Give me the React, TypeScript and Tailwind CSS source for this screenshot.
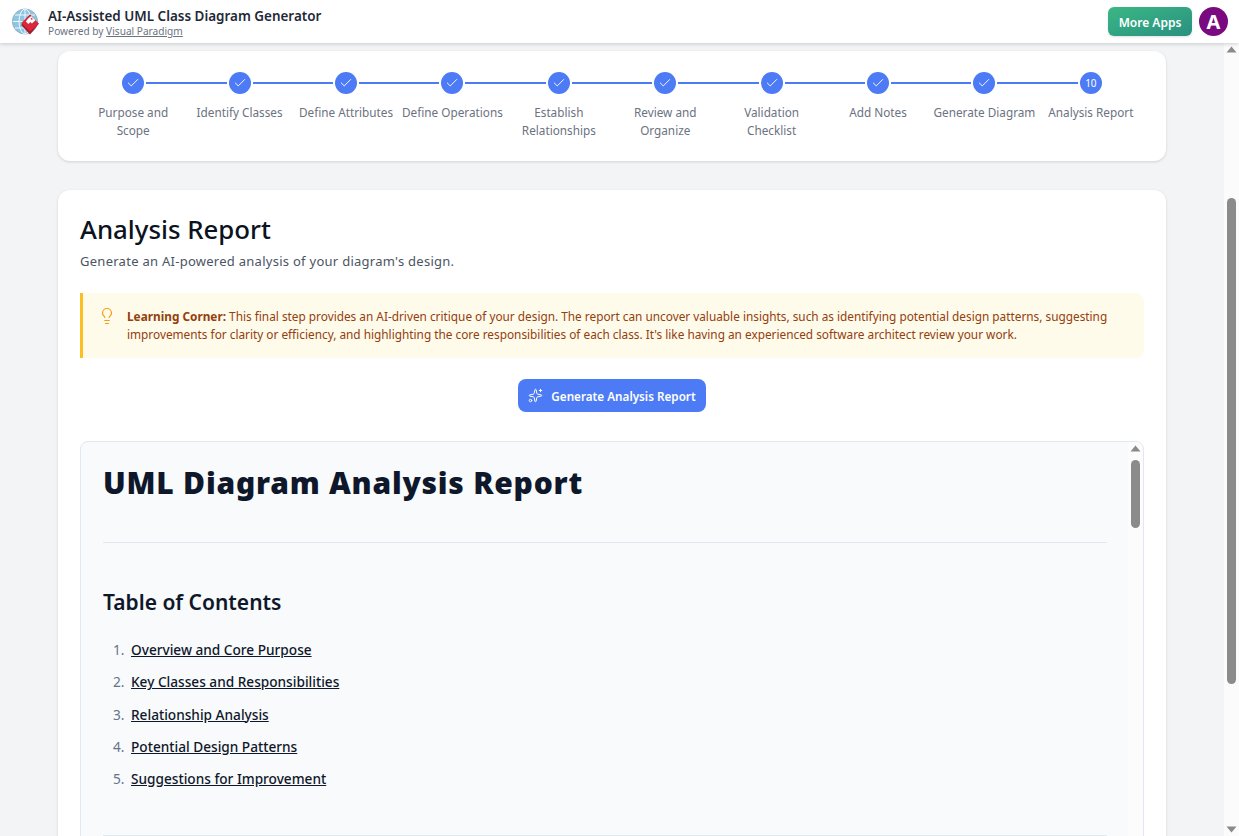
import React from "react";
import { Check, Lightbulb, Sparkles } from "lucide-react";

const steps = [
  ["Purpose and", "Scope"],
  ["Identify Classes"],
  ["Define Attributes"],
  ["Define Operations"],
  ["Establish", "Relationships"],
  ["Review and", "Organize"],
  ["Validation", "Checklist"],
  ["Add Notes"],
  ["Generate Diagram"],
  ["Analysis Report"],
];

const toc = [
  "Overview and Core Purpose",
  "Key Classes and Responsibilities",
  "Relationship Analysis",
  "Potential Design Patterns",
  "Suggestions for Improvement",
];

function Logo() {
  return (
    <svg width="27" height="27" viewBox="0 0 27 27" className="shrink-0">
      <circle cx="13" cy="13.5" r="12.6" fill="#8cc6e2" stroke="#8fa9b5" strokeWidth="0.8" />
      <g fill="none" stroke="#f0f8fc" strokeWidth="1">
        <ellipse cx="13" cy="13.5" rx="6" ry="12.5" />
        <path d="M1 13.5h24M3 7h20M3 20h20M13 1v25" />
      </g>
      <path d="M18 6.5l8.8 9.2L18 26.5 9.2 17z" fill="#a8182a" />
      <path d="M18 6.5l8.8 9.2L18 23.5 9.2 15z" fill="#d9293a" />
      <path d="M16.2 10.5l3-2.6 4.3 4.3-3.6 3.4-1.5-1.5-2 2-2.6-2.6z" fill="#fff" />
      <path d="M18.6 10.8l1-1 1.2 1.2-1 1z" fill="#d9293a" />
    </svg>
  );
}

function ScrollTrack({ thumbTop, thumbHeight, className }: { thumbTop: string; thumbHeight: string; className: string }) {
  return (
    <div className={className}>
      <svg width="15" height="15" viewBox="0 0 15 15" className="shrink-0">
        <path d="M7.5 3.5L12.5 9.5H2.5z" fill="#8a8a8a" />
      </svg>
      <div className={`mx-[3px] w-[9px] rounded-full bg-[#8b8b8b] ${thumbTop} ${thumbHeight}`} />
      <div className="flex-1" />
      <svg width="15" height="15" viewBox="0 0 15 15" className="shrink-0">
        <path d="M7.5 11.5L12.5 5.5H2.5z" fill="#8a8a8a" />
      </svg>
    </div>
  );
}

export default function App() {
  return (
    <div className="h-[836px] w-[1239px] overflow-hidden bg-[#f3f4f6] flex flex-col font-['Noto_Sans','Open_Sans',sans-serif]">
      <header className="z-10 h-[43px] shrink-0 bg-white flex items-center justify-between pl-3 pr-[11px] shadow-[0_1px_4px_rgba(0,0,0,0.18)]">
        <div className="flex items-center gap-[9px]">
          <Logo />
          <div className="flex flex-col pt-[3px]">
            <span className="text-[13.45px] leading-[17px] font-semibold text-[#1f2937]">AI-Assisted UML Class Diagram Generator</span>
            <span className="text-[10.15px] leading-[13px] text-[#6b7280]">
              Powered by <span className="underline">Visual Paradigm</span>
            </span>
          </div>
        </div>
        <div className="flex items-center gap-[7px]">
          <div className="h-[29px] w-[84px] rounded-md bg-gradient-to-br from-[#3bb784] to-[#2a9080] shadow-sm flex items-center justify-center pt-[2px] text-[12px] font-semibold text-white">
            More Apps
          </div>
          <div className="h-[29px] w-[29px] rounded-full bg-[#7a0a80] flex items-center justify-center text-[20px] font-bold text-white">
            A
          </div>
        </div>
      </header>

      <div className="flex-1 min-h-0 flex">
        <main className="flex-1 min-w-0 overflow-hidden pl-[58px] pr-[58px] pt-2">
          <section className="h-[110px] rounded-xl bg-white shadow-[0_1px_3px_rgba(0,0,0,0.14)] px-[22px] pt-[21px]">
            <div className="flex">
              {steps.map((s, i) => (
                <div key={i} className="relative flex-1 flex flex-col items-center">
                  {i < steps.length - 1 && (
                    <div className="absolute left-[calc(50%+13px)] right-[calc(-50%+13px)] top-[10px] h-[2px] bg-[#4c7bf5]" />
                  )}
                  <div className="h-[22px] w-[22px] rounded-full bg-[#4c7bf5] flex items-center justify-center text-white text-[10px]">
                    {i < 9 ? <Check size={14} strokeWidth={1.6} /> : "10"}
                  </div>
                  <div className="mt-[9px] text-center text-[11.75px] leading-[18px] text-[#6b7280] whitespace-nowrap">
                    {s.map((l) => (
                      <div key={l}>{l}</div>
                    ))}
                  </div>
                </div>
              ))}
            </div>
          </section>

          <section className="mt-[29px] rounded-t-xl bg-white shadow-[0_1px_3px_rgba(0,0,0,0.14)] px-[22px] pt-[22px] h-[700px]">
            <h1 className="text-[25.8px] leading-[34px] font-medium text-[#0b1220]">Analysis Report</h1>
            <p className="mt-[6px] text-[13px] leading-[18px] tracking-[0.27px] text-[#4b5563]">Generate an AI-powered analysis of your diagram's design.</p>

            <div className="mt-[23px] h-[65px] rounded-r-lg border-l-[3px] border-[#fbbf24] bg-[#fffbeb] flex pl-[15px] pr-[20px] pt-[14px] gap-[11px]">
              <Lightbulb size={18} strokeWidth={1.6} className="shrink-0 text-[#f59e0b]" />
              <p className="text-[11.82px] leading-[18px] text-[#92400e]">
                <strong className="font-bold">Learning Corner:</strong> This final step provides an AI-driven critique of your design. The report can uncover valuable insights, such as identifying potential design patterns, suggesting improvements for clarity or efficiency, and highlighting the core responsibilities of each class. It's like having an experienced software architect review your work.
              </p>
            </div>

            <div className="mt-[21px] flex justify-center">
              <div className="h-[33px] w-[188px] rounded-lg bg-[#4c7bf5] flex items-center justify-center gap-2 pt-[2px] text-[11.7px] font-semibold text-white">
                <Sparkles size={15} strokeWidth={1.6} className="-mt-[2px]" />
                Generate Analysis Report
              </div>
            </div>

            <div className="mt-[29px] h-[500px] rounded-t-lg border border-[#e2e8f0] bg-[#f8fafc] flex overflow-hidden">
              <div className="flex-1 min-w-0 pl-[22px] pr-[21px] pt-[20px]">
                <h2 className="text-[30px] leading-[42px] font-black tracking-[0.78px] text-[#0f172a]">UML Diagram Analysis Report</h2>
                <hr className="mt-[38px] border-[#e2e8f0]" />
                <h3 className="mt-[44px] text-[21px] leading-[30px] font-semibold text-[#0f172a]">Table of Contents</h3>
                <ol className="mt-[21px] list-none pl-[10px] text-[13.65px]">
                  {toc.map((t, i) => (
                    <li key={t} className="h-[32.3px] leading-[24px] text-[#0f172a] flex">
                      <span className="w-[18px] shrink-0 text-[#64748b]">{i + 1}.</span>
                      <span className="underline font-medium">{t}</span>
                    </li>
                  ))}
                </ol>
                <hr className="mt-[36px] border-[#e2e8f0]" />
              </div>
              <ScrollTrack className="w-[15px] shrink-0 bg-[#fcfcfd] flex flex-col" thumbTop="mt-[3px]" thumbHeight="h-[68px]" />
            </div>
          </section>
        </main>
        <ScrollTrack className="w-[15px] shrink-0 bg-[#fbfbfb] flex flex-col" thumbTop="mt-[140px]" thumbHeight="h-[486px]" />
      </div>
    </div>
  );
}
